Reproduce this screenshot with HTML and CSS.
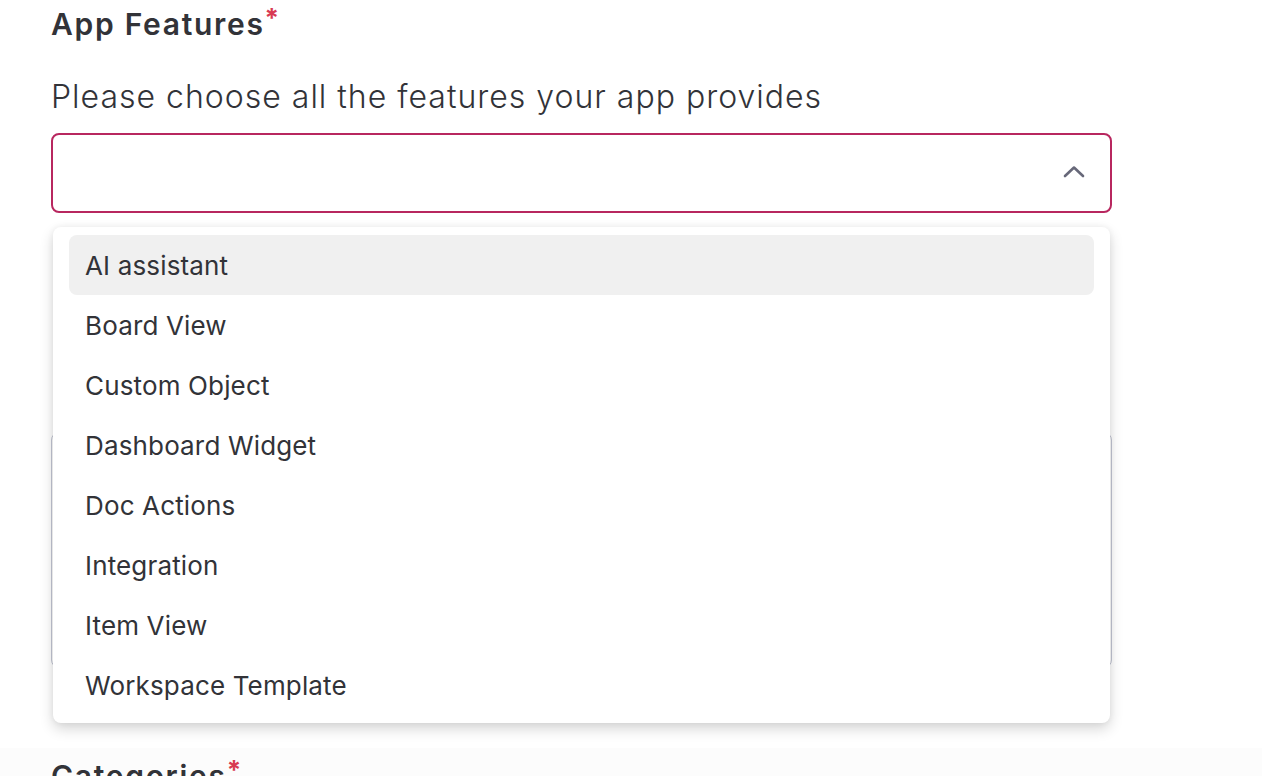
FILE: index.html
```html
<!DOCTYPE html>
<html lang="en">
<head>
<meta charset="utf-8">
<title>App Features</title>
<link rel="stylesheet" href="styles.css">
</head>
<body>
<div class="page">
  <section class="field">
    <h2 class="label">App Features<span class="req">*</span></h2>
    <p class="hint">Please choose all the features your app provides</p>
    <div class="select-wrap">
      <div class="select">
        <svg class="chevron" width="24" height="24" viewBox="0 0 24 24" aria-hidden="true">
          <path d="M3 16 L12 7.5 L21 16" fill="none" stroke="#676879" stroke-width="2.6" stroke-linecap="round" stroke-linejoin="round"/>
        </svg>
      </div>
      <ul class="menu">
        <li class="option active">AI assistant</li>
        <li class="option">Board View</li>
        <li class="option">Custom Object</li>
        <li class="option">Dashboard Widget</li>
        <li class="option">Doc Actions</li>
        <li class="option">Integration</li>
        <li class="option">Item View</li>
        <li class="option">Workspace Template</li>
      </ul>
    </div>
    <div class="textarea"></div>
  </section>
  <section class="field alt">
    <h2 class="label">Categories<span class="req">*</span></h2>
  </section>
</div>
</body>
</html>
```

FILE: styles.css
```css
* { box-sizing: border-box; }
html, body {
  margin: 0;
  padding: 0;
  background: #ffffff;
  overflow: hidden;
}
body {
  font-family: "Inter", "Roboto", sans-serif;
  color: #323338;
}
.page {
  width: 1262px;
  height: 776px;
  overflow: hidden;
}
.field {
  padding: 0 150px 0 51px;
}
.label {
  margin: 0;
  font-family: "Inter", sans-serif;
  font-weight: 600;
  font-size: 30px;
  line-height: 48px;
  letter-spacing: 1.7px;
  color: #323338;
}
.req {
  color: #d83a52;
  font-size: 26px;
  font-weight: 700;
  line-height: 0;
  vertical-align: 8px;
  margin-left: 0;
  letter-spacing: 0;
}
.hint {
  margin: 27px 0 0 0;
  font-family: "Inter", sans-serif;
  font-weight: 300;
  font-size: 32px;
  line-height: 44px;
  letter-spacing: 1px;
  color: #323338;
}
.select-wrap {
  position: relative;
  margin-top: 14px;
}
.select {
  height: 80px;
  border: 2px solid #b8275f;
  border-radius: 8px;
  display: flex;
  align-items: center;
  justify-content: flex-end;
  padding-right: 24px;
}
.chevron {
  display: block;
  margin-top: -2px;
}
.menu {
  position: absolute;
  top: 94px;
  left: 2px;
  right: 2px;
  margin: 0;
  padding: 8px 16px;
  list-style: none;
  background: #ffffff;
  border-radius: 8px;
  box-shadow: 0 6px 14px rgba(0, 0, 0, 0.16), 0 0 6px rgba(0, 0, 0, 0.06);
  z-index: 10;
}
.option {
  height: 60px;
  display: flex;
  align-items: center;
  padding-left: 16px;
  border-radius: 8px;
  font-size: 26px;
  letter-spacing: 0.15px;
  color: #323338;
}
.option.active {
  background: #f0f0f0;
}
.textarea {
  margin-top: 219px;
  height: 236px;
  border: 1px solid #c3c6d4;
  border-radius: 8px;
  background: #ffffff;
}
.field.alt {
  margin-top: 80px;
  padding-top: 4px;
  height: 120px;
  background: #fcfcfc;
}
```
